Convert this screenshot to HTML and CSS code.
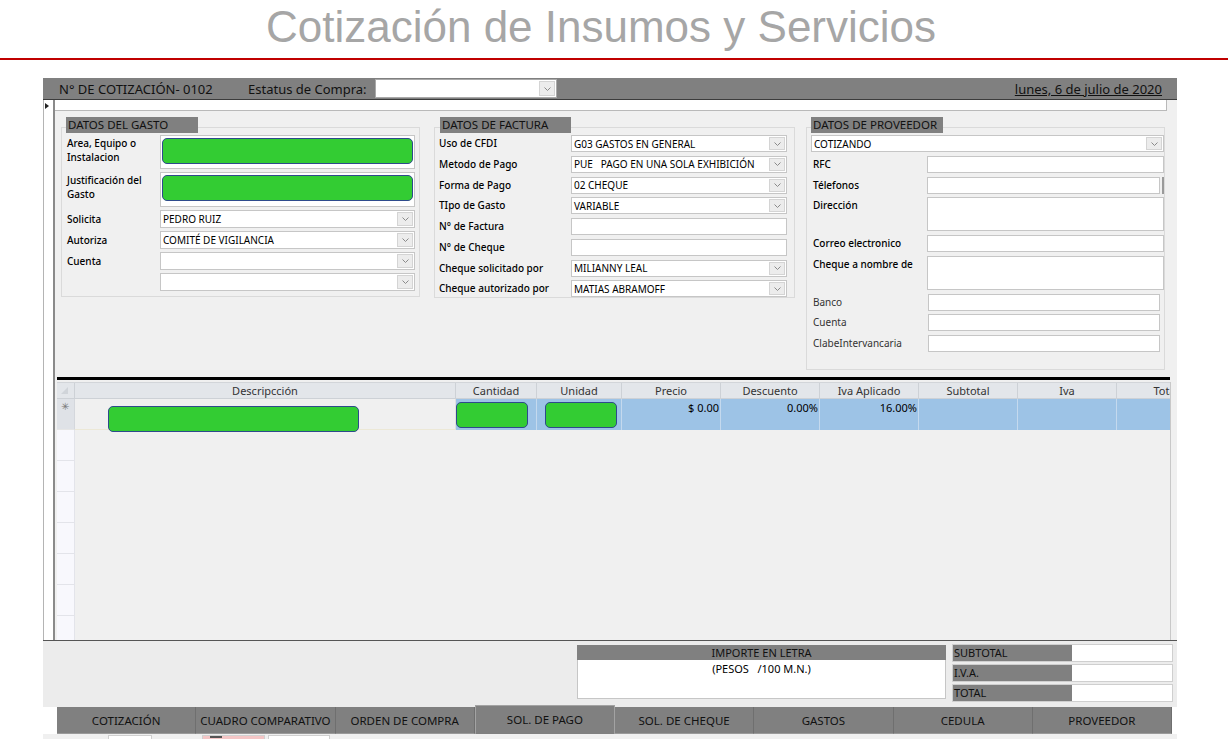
FILE: index.html
```html
<!DOCTYPE html>
<html lang="es">
<head>
<meta charset="utf-8">
<title>Cotización de Insumos y Servicios</title>
<link rel="stylesheet" href="styles.css">
</head>
<body>
<div class="title">Cotización de Insumos y Servicios</div>
<div class="rule"></div>

<div class="form">
  <div class="topbar">
    <span class="quote-no">N° DE COTIZACIÓN- 0102</span>
    <span class="estatus">Estatus de Compra:</span>
    <div class="combo status"><span class="val"></span><span class="dd"><svg width="7" height="4" viewBox="0 0 7 4"><path d="M0.5 0.5L3.5 3.5L6.5 0.5" fill="none" stroke="#8a8a8a" stroke-width="1"/></svg></span></div>
    <span class="date">lunes, 6 de julio de 2020</span>
  </div>

  <div class="content">
    <div class="selector"><span class="arrow"></span></div>
    <div class="detail">
      <div class="strip"></div>

      <div class="groups">
        <section class="group g1">
          <div class="gtitle">DATOS DEL GASTO</div>
          <div class="rows">
            <span class="lbl two">Area, Equipo o<br>Instalacion</span>
            <div class="field"><div class="green"></div></div>
            <span class="lbl two">Justificación del<br>Gasto</span>
            <div class="field"><div class="green"></div></div>
            <span class="lbl">Solicita</span>
            <div class="combo"><span class="val">PEDRO RUIZ</span><span class="dd"><svg width="7" height="4" viewBox="0 0 7 4"><path d="M0.5 0.5L3.5 3.5L6.5 0.5" fill="none" stroke="#8a8a8a" stroke-width="1"/></svg></span></div>
            <span class="lbl">Autoriza</span>
            <div class="combo"><span class="val">COMITÉ DE VIGILANCIA</span><span class="dd"><svg width="7" height="4" viewBox="0 0 7 4"><path d="M0.5 0.5L3.5 3.5L6.5 0.5" fill="none" stroke="#8a8a8a" stroke-width="1"/></svg></span></div>
            <span class="lbl">Cuenta</span>
            <div class="combo"><span class="val"></span><span class="dd"><svg width="7" height="4" viewBox="0 0 7 4"><path d="M0.5 0.5L3.5 3.5L6.5 0.5" fill="none" stroke="#8a8a8a" stroke-width="1"/></svg></span></div>
            <span class="lbl"></span>
            <div class="combo"><span class="val"></span><span class="dd"><svg width="7" height="4" viewBox="0 0 7 4"><path d="M0.5 0.5L3.5 3.5L6.5 0.5" fill="none" stroke="#8a8a8a" stroke-width="1"/></svg></span></div>
          </div>
        </section>

        <section class="group g2">
          <div class="gtitle">DATOS DE FACTURA</div>
          <div class="rows">
            <span class="lbl">Uso de CFDI</span>
            <div class="combo"><span class="val">G03 GASTOS EN GENERAL</span><span class="dd"><svg width="7" height="4" viewBox="0 0 7 4"><path d="M0.5 0.5L3.5 3.5L6.5 0.5" fill="none" stroke="#8a8a8a" stroke-width="1"/></svg></span></div>
            <span class="lbl">Metodo de Pago</span>
            <div class="combo"><span class="val">PUE   PAGO EN UNA SOLA EXHIBICIÓN</span><span class="dd"><svg width="7" height="4" viewBox="0 0 7 4"><path d="M0.5 0.5L3.5 3.5L6.5 0.5" fill="none" stroke="#8a8a8a" stroke-width="1"/></svg></span></div>
            <span class="lbl">Forma de Pago</span>
            <div class="combo"><span class="val">02 CHEQUE</span><span class="dd"><svg width="7" height="4" viewBox="0 0 7 4"><path d="M0.5 0.5L3.5 3.5L6.5 0.5" fill="none" stroke="#8a8a8a" stroke-width="1"/></svg></span></div>
            <span class="lbl">TIpo de Gasto</span>
            <div class="combo"><span class="val">VARIABLE</span><span class="dd"><svg width="7" height="4" viewBox="0 0 7 4"><path d="M0.5 0.5L3.5 3.5L6.5 0.5" fill="none" stroke="#8a8a8a" stroke-width="1"/></svg></span></div>
            <span class="lbl">N° de Factura</span>
            <div class="field"></div>
            <span class="lbl">N° de Cheque</span>
            <div class="field"></div>
            <span class="lbl">Cheque solicitado por</span>
            <div class="combo"><span class="val">MILIANNY LEAL</span><span class="dd"><svg width="7" height="4" viewBox="0 0 7 4"><path d="M0.5 0.5L3.5 3.5L6.5 0.5" fill="none" stroke="#8a8a8a" stroke-width="1"/></svg></span></div>
            <span class="lbl">Cheque autorizado por</span>
            <div class="combo"><span class="val">MATIAS ABRAMOFF</span><span class="dd"><svg width="7" height="4" viewBox="0 0 7 4"><path d="M0.5 0.5L3.5 3.5L6.5 0.5" fill="none" stroke="#8a8a8a" stroke-width="1"/></svg></span></div>
          </div>
        </section>

        <section class="group g3">
          <div class="gtitle">DATOS DE PROVEEDOR</div>
          <div class="rows">
            <div class="combo span2"><span class="val">COTIZANDO</span><span class="dd"><svg width="7" height="4" viewBox="0 0 7 4"><path d="M0.5 0.5L3.5 3.5L6.5 0.5" fill="none" stroke="#8a8a8a" stroke-width="1"/></svg></span></div>
            <span class="lbl">RFC</span>
            <div class="field"></div>
            <span class="lbl">Télefonos</span>
            <div class="scrollwrap"><div class="field"></div><span class="sbar"></span></div>
            <span class="lbl">Dirección</span>
            <div class="field"></div>
            <span class="lbl">Correo electronico</span>
            <div class="field"></div>
            <span class="lbl">Cheque a nombre de</span>
            <div class="field"></div>
            <span class="lbl light">Banco</span>
            <div class="field inset"></div>
            <span class="lbl light">Cuenta</span>
            <div class="field inset"></div>
            <span class="lbl light">ClabeIntervancaria</span>
            <div class="field inset"></div>
          </div>
        </section>
      </div>

      <div class="heavy"></div>

      <div class="sheet">
        <div class="srow head">
          <span class="c sel"><span class="corner"></span></span>
          <span class="c">Descripcción</span>
          <span class="c">Cantidad</span>
          <span class="c">Unidad</span>
          <span class="c">Precio</span>
          <span class="c">Descuento</span>
          <span class="c">Iva Aplicado</span>
          <span class="c">Subtotal</span>
          <span class="c">Iva</span>
          <span class="c">Total</span>
        </div>
        <div class="srow data">
          <span class="c sel"><span class="star">✳</span></span>
          <span class="c desc"><span class="green gdesc"></span></span>
          <span class="c blue"><span class="green gcant"></span></span>
          <span class="c blue"><span class="green gunit"></span></span>
          <span class="c blue amt">$ 0.00</span>
          <span class="c blue amt">0.00%</span>
          <span class="c blue amt">16.00%</span>
          <span class="c blue"></span>
          <span class="c blue"></span>
          <span class="c blue"></span>
        </div>
        <div class="erow"></div>
        <div class="erow"></div>
        <div class="erow"></div>
        <div class="erow"></div>
        <div class="erow"></div>
        <div class="erow"></div>
        <div class="erow"></div>
      </div>
    </div>
  </div>

  <div class="footer">
    <div class="importe">
      <div class="ihead">IMPORTE EN LETRA</div>
      <div class="ibox">(PESOS&nbsp;&nbsp; /100 M.N.)</div>
    </div>
    <div class="totals">
      <div class="trow"><span class="tl">SUBTOTAL</span><span class="tv"></span></div>
      <div class="trow"><span class="tl">I.V.A.</span><span class="tv"></span></div>
      <div class="trow"><span class="tl">TOTAL</span><span class="tv"></span></div>
    </div>
  </div>

  <div class="tabs">
    <span class="tab">COTIZACIÓN</span>
    <span class="tab">CUADRO COMPARATIVO</span>
    <span class="tab">ORDEN DE COMPRA</span>
    <span class="tab active">SOL. DE PAGO</span>
    <span class="tab">SOL. DE CHEQUE</span>
    <span class="tab">GASTOS</span>
    <span class="tab">CEDULA</span>
    <span class="tab">PROVEEDOR</span>
  </div>

  <div class="bottom">
    <span class="bx b1"></span>
    <span class="bx b2"><span class="mark"></span></span>
    <span class="bx b3"></span>
  </div>
</div>
</body>
</html>
```
FILE: styles.css
```css
* { box-sizing: border-box; }

body {
  margin: 0;
  width: 1228px;
  height: 739px;
  overflow: hidden;
  background: #ffffff;
  font-family: "Noto Sans", "Open Sans", sans-serif;
  color: #000;
}

.title {
  height: 58px;
  line-height: 54px;
  padding-right: 26px;
  text-align: center;
  white-space: nowrap;
  font-family: "Liberation Sans", Arial, sans-serif;
  font-size: 44px;
  color: #a6a6a6;
}

.rule {
  height: 2px;
  background: #c00000;
}

.form {
  margin: 18px 0 0 43px;
  width: 1134px;
}

/* top bar */
.topbar {
  height: 22px;
  display: flex;
  align-items: center;
  padding: 0 15px 0 16px;
  background: #808080;
  border-bottom: 1px solid #3c3c3c;
  font-size: 13px;
  color: #111;
  white-space: nowrap;
}
.quote-no { width: 189px; }
.estatus { width: 127px; }
.combo.status {
  width: 182px;
  height: 19px;
  border-color: #a9a9a9;
}
.date {
  margin-left: auto;
  text-decoration: underline;
}

/* combo / field */
.combo {
  display: flex;
  align-items: center;
  background: #fff;
  border: 1px solid #c6c6c6;
  font-size: 10px;
  padding-left: 2px;
  overflow: hidden;
}
.combo .val {
  white-space: pre;
  flex: 1;
  line-height: 14px;
}
.dd {
  width: 16px;
  height: calc(100% - 2px);
  margin-right: 1px;
  background: #ececec;
  border: 1px solid #d4d4d4;
  display: flex;
  align-items: center;
  justify-content: center;
}
.field {
  background: #fff;
  border: 1px solid #c6c6c6;
}

/* body */
.content {
  display: flex;
  height: 540px;
}
.selector {
  width: 10px;
  background: #fff;
  border-left: 1px solid #b4b4b4;
}
.arrow {
  display: block;
  width: 0;
  height: 0;
  margin: 3px 0 0 1px;
  border-left: 4px solid #222;
  border-top: 3px solid transparent;
  border-bottom: 3px solid transparent;
}
.detail {
  flex: 1;
  background: #f0f0f0;
  border-left: 2px solid #8a8a8a;
}
.strip {
  width: 1112px;
  height: 11px;
  background: #fff;
  border-right: 1px solid #b9b9b9;
  border-bottom: 1px solid #b9b9b9;
}

.groups {
  display: flex;
  align-items: flex-start;
  height: 266px;
  padding: 16px 0 0 6px;
}
.group {
  border: 1px solid #dadada;
}
.gtitle {
  height: 16px;
  background: #808080;
  font-size: 11.5px;
  line-height: 16px;
  padding-left: 2px;
  color: #111;
  white-space: nowrap;
  margin-top: -11px;
}
.rows {
  display: grid;
  margin-top: 2px;
}
.lbl {
  font-size: 10px;
  line-height: 17px;
  font-weight: 500;
  white-space: nowrap;
}
.lbl.light {
  font-weight: 400;
  color: #333;
}

/* group 1 */
.g1 {
  width: 359px;
  padding: 0 0 5px 5px;
}
.g1 .gtitle { width: 132px; margin-left: -1px; }
.g1 .rows {
  grid-template-columns: 93px 255px;
  grid-template-rows: 34px 35px 18px 18px 18px 18px;
  row-gap: 3px;
}
.g1 .lbl { line-height: 18px; }
.g1 .lbl.two { line-height: 14px; padding-top: 1px; }
.g1 .field { padding: 2px 1px 0 1px; }
.green {
  display: block;
  height: 26px;
  background: #33cc33;
  border: 1px solid #2e4a8c;
  border-radius: 5px;
}

/* group 2 */
.g2 {
  width: 361px;
  margin-left: 14px;
  padding: 0 0 0 4px;
}
.g2 .gtitle { width: 131px; margin-left: 1px; }
.g2 .rows {
  grid-template-columns: 132px 216px;
  grid-auto-rows: 17px;
  row-gap: 3.75px;
}

/* group 3 */
.g3 {
  width: 359px;
  margin-left: 11px;
  padding: 0 0 17px 4px;
}
.g3 .gtitle { width: 132px; }
.g3 .rows {
  grid-template-columns: 116px 237px;
  grid-template-rows: 17px 17px 17px 34px 17px 34px 17px 17px 17px;
  row-gap: 3.75px;
}
.g3 .lbl { padding-left: 2px; }
.span2 { grid-column: 1 / 3; }
.scrollwrap {
  display: flex;
  gap: 2px;
}
.scrollwrap .field { width: 233px; }
.sbar {
  width: 2px;
  background: #9a9a9a;
}
.field.inset {
  width: 232px;
  margin-left: 1px;
}

/* heavy separator */
.heavy {
  width: 1113px;
  height: 3px;
  margin: 0 0 2px 2px;
  background: #000;
}

/* datasheet */
.sheet {
  width: 1114px;
  height: 258px;
  margin-left: 2px;
  overflow: hidden;
  border-right: 1px solid #c8c8c8;
  background: #f0f0f0;
}
.srow {
  display: grid;
  grid-template-columns: 18px 381px 81px 85px 99px 99px 99px 99px 99px 99px;
  grid-template-rows: 100%;
  width: 1159px;
}
.srow .c {
  border-right: 1px solid #cdd1d6;
  font-size: 11px;
  white-space: nowrap;
  min-width: 0;
}
.head {
  height: 17px;
  background: #e3e6ea;
  border-top: 1px solid #d2d5d9;
  border-bottom: 1px solid #cdd1d6;
}
.head .c {
  text-align: center;
  line-height: 15px;
  color: #333;
}
.corner {
  display: block;
  width: 0;
  height: 0;
  margin: 4px 0 0 4px;
  border-left: 7px solid transparent;
  border-bottom: 7px solid #d0d4d9;
}
.data {
  height: 31px;
}
.data .c.sel {
  background: #dfe2e7;
  border-right-color: #d4d7dc;
  border-bottom: 1px solid #e6e6e6;
}
.star {
  display: block;
  font-family: "DejaVu Sans", sans-serif;
  font-size: 10px;
  line-height: 10px;
  color: #7a7a7a;
  padding: 3px 0 0 4px;
}
.data .c.desc {
  background: #f0f0f0;
  border-right-color: #e0e0e0;
  border-bottom: 1px solid #ece8d6;
}
.data .c.blue {
  background: #9dc3e6;
  border-right-color: #c4d9ee;
}
.data .c.amt {
  text-align: right;
  padding: 1px 1px 0 0;
  line-height: 15px;
  color: #000;
}
.gdesc {
  width: 251px;
  margin: 7px 0 0 33px;
  position: relative;
}
.gcant {
  width: 72px;
  margin-top: 3px;
}
.gunit {
  width: 72px;
  margin: 3px 0 0 8px;
}
.erow {
  width: 18px;
  height: 31px;
  background: #f8f8fd;
  border-bottom: 1px solid #e3e4ea;
  border-right: 1px solid #e3e4ea;
}

/* footer */
.footer {
  height: 67px;
  display: flex;
  align-items: flex-start;
  padding: 4px 0 0 534px;
  background: #ececec;
  border-top: 1px solid #555;
}
.importe { width: 369px; }
.ihead {
  height: 15px;
  background: #808080;
  text-align: center;
  font-size: 11px;
  line-height: 15px;
  color: #111;
}
.ibox {
  height: 39px;
  background: #fff;
  border: 1px solid #c6c6c6;
  border-top: none;
  text-align: center;
  font-size: 11px;
  line-height: 15px;
  padding-top: 1px;
}
.totals {
  margin: -1px 0 0 6px;
  display: flex;
  flex-direction: column;
  gap: 2px;
}
.trow {
  display: flex;
  height: 18px;
  border: 1px solid #cfcfcf;
}
.tl {
  width: 119px;
  background: #808080;
  font-size: 11px;
  line-height: 16px;
  padding-left: 1px;
  color: #111;
}
.tv {
  width: 100px;
  background: #fff;
}

/* tabs */
.tabs {
  display: flex;
  width: 1115px;
  height: 27px;
  margin-left: 14px;
}
.tab {
  flex: 1;
  background: #808080;
  border-right: 1px solid #6f6f6f;
  border-bottom: 1px solid #9a9a9a;
  text-align: center;
  font-size: 11.5px;
  line-height: 27px;
  color: #111;
  white-space: nowrap;
}
.tab.active {
  margin-top: -2px;
  height: 29px;
  line-height: 27px;
  border: 1px solid #a3a3a3;
  border-bottom: none;
}

/* bottom controls (cut off) */
.bottom {
  height: 6px;
  display: flex;
  align-items: flex-start;
  padding-top: 1px;
  background: #f0f0f0;
  border-bottom: 1px solid #d6d6d6;
}
.bx {
  height: 5px;
  border: 1px solid #d0d0d0;
  border-bottom: none;
  background: #fff;
}
.b1 { width: 44px; margin-left: 65px; }
.b2 { width: 63px; margin-left: 50px; background: #f4c6c6; padding-left: 7px; }
.b3 { width: 62px; margin-left: 3px; }
.mark {
  display: block;
  width: 12px;
  height: 2px;
  background: #555;
}
```
